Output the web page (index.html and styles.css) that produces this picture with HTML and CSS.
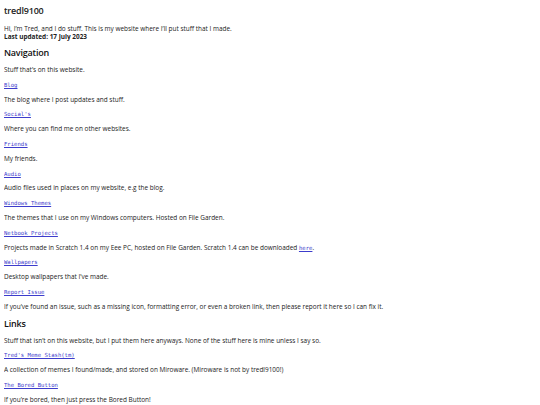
FILE: index.html
```html
<!DOCTYPE html>
<html>
<head>
<meta charset="utf-8">
<link rel="stylesheet" href="styles.css">
</head>
<body>
<h1 class="title">tredl9100</h1>
<p class="intro">Hi, I’m Tred, and I do stuff. This is my website where I’ll put stuff that I made.<br><b>Last updated: 17 July 2023</b></p>
<h2 class="section">Navigation</h2>
<p>Stuff that’s on this website.</p>
<p><a href="#">Blog</a></p>
<p>The blog where I post updates and stuff.</p>
<p><a href="#">Social's</a></p>
<p>Where you can find me on other websites.</p>
<p><a href="#">Friends</a></p>
<p>My friends.</p>
<p><a href="#">Audio</a></p>
<p>Audio files used in places on my website, e.g the blog.</p>
<p><a href="#">Windows Themes</a></p>
<p>The themes that I use on my Windows computers. Hosted on File Garden.</p>
<p><a href="#">Netbook Projects</a></p>
<p>Projects made in Scratch 1.4 on my Eee PC, hosted on File Garden. Scratch 1.4 can be downloaded <a href="#">here</a>.</p>
<p><a href="#">Wallpapers</a></p>
<p>Desktop wallpapers that I’ve made.</p>
<p><a href="#">Report Issue</a></p>
<p>If you’ve found an issue, such as a missing icon, formatting error, or even a broken link, then please report it here so I can fix it.</p>
<h2 class="section">Links</h2>
<p>Stuff that isn’t on this website, but I put them here anyways. None of the stuff here is mine unless I say so.</p>
<p><a href="#">Tred's Meme Stash(tm)</a></p>
<p>A collection of memes I found/made, and stored on Miroware. (Miroware is not by tredl9100!)</p>
<p><a href="#">The Bored Button</a></p>
<p>If you’re bored, then just press the Bored Button!</p>
</body>
</html>
```
FILE: styles.css
```css
html, body {
  background: #fff;
}
body {
  margin: 3px 4px;
  font-family: "Open Sans", "Noto Sans", sans-serif;
  font-size: 6.45px;
  line-height: 8px;
  color: #222;
}
.title {
  font-size: 9px;
  font-weight: 600;
  line-height: 12px;
  margin: 2px 0 8px;
  letter-spacing: -0.2px;
}
.intro {
  margin: 0 0 6px;
}
.section {
  font-size: 9px;
  font-weight: 600;
  line-height: 12px;
  margin: 0 0 6px;
  color: #111;
  letter-spacing: -0.2px;
}
p {
  margin: 6.8px 0;
}
.section + p {
  margin-top: 7px;
}
a {
  font-family: "DejaVu Sans Mono", "Liberation Mono", monospace;
  font-size: 5.6px;
  line-height: 8px;
  color: #3c3ccc;
}
```
